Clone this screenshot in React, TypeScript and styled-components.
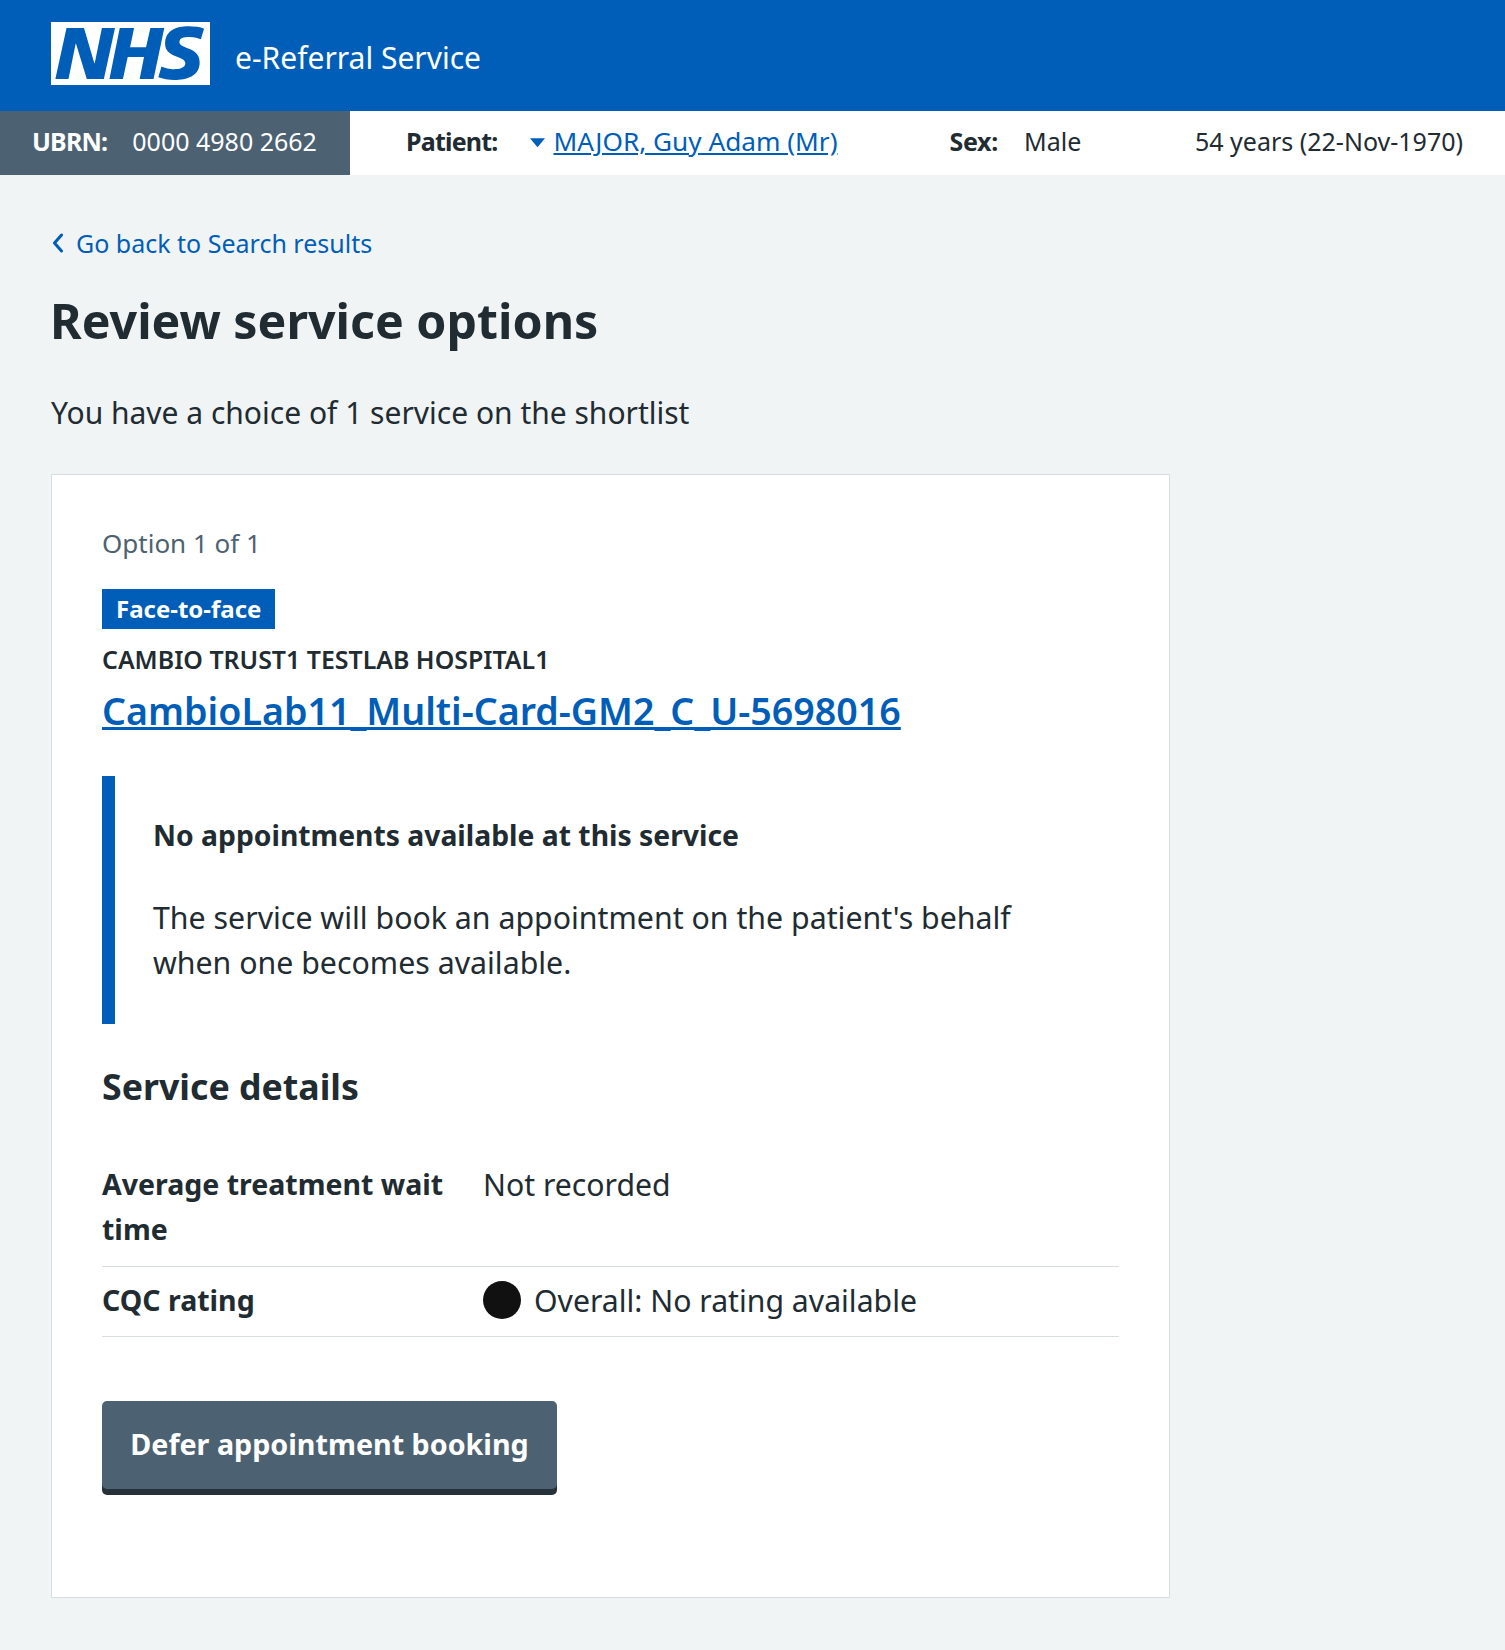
import React from 'react';
import styled, {createGlobalStyle} from 'styled-components';

const Palette = {
  Blue: '#005eb8',
  Text: '#212b32',
  Secondary: '#4c6272',
  Page: '#f0f4f5',
  Border: '#d8dde0',
  Shadow: '#263139',
};

const GlobalStyle = createGlobalStyle`
  html, body {
    margin: 0;
    padding: 0;
    background: ${Palette.Page};
    color: ${Palette.Text};
    font-family: "Noto Sans", "Open Sans", sans-serif;
  }
`;

export default function App(): JSX.Element {
  return (
    <Page>
      <GlobalStyle />
      <Header>
        <Logo viewBox="0 0 40 16" preserveAspectRatio="none" role="img" aria-label="NHS">
          <path fill="#fff" d="M0 0h40v16H0z" />
          <path
            fill={Palette.Blue}
            d="M3.9 1.5h4.4l2.6 9h.1l1.8-9h3.3l-2.8 13H9l-2.7-9h-.1l-1.8 9H1.1M17.3 1.5h3.6l-1 4.9h4L25 1.5h3.5l-2.7 13h-3.5l1.1-5.6h-4.1l-1.2 5.6h-3.4M37.7 4.4c-.7-.3-1.6-.6-2.9-.6-1.4 0-2.5.2-2.5 1.3 0 1.8 5.1 1.2 5.1 5.1 0 3.6-3.3 4.5-6.4 4.5-1.3 0-2.9-.3-4-.7l.8-2.7c.7.4 2.1.7 3.2.7s2.8-.2 2.8-1.5c0-2.1-5.1-1.3-5.1-5 0-3.4 2.9-4.4 5.8-4.4 1.6 0 3.1.2 4 .6"
          />
        </Logo>
        <ServiceName>e-Referral Service</ServiceName>
      </Header>

      <PatientBar>
        <Ubrn>
          <UbrnLabel>UBRN:</UbrnLabel>
          <span>0000 4980 2662</span>
        </Ubrn>
        <PatientLabel>Patient:</PatientLabel>
        <Caret viewBox="0 0 16 10">
          <path fill={Palette.Blue} d="M0 0h16L8 9.5z" />
        </Caret>
        <PatientLink href="#">MAJOR, Guy Adam (Mr)</PatientLink>
        <SexLabel>Sex:</SexLabel>
        <SexValue>Male</SexValue>
        <Age>54 years (22-Nov-1970)</Age>
      </PatientBar>

      <Main>
        <BackLink href="#">
          <Chevron viewBox="0 0 12 20">
            <path d="M10 2L3 10l7 8" fill="none" stroke={Palette.Blue} strokeWidth="3" strokeLinecap="round" strokeLinejoin="round" />
          </Chevron>
          Go back to Search results
        </BackLink>
        <Title>Review service options</Title>
        <Lead>You have a choice of 1 service on the shortlist</Lead>

        <Card>
          <OptionCount>Option 1 of 1</OptionCount>
          <Tag>Face-to-face</Tag>
          <Provider>CAMBIO TRUST1 TESTLAB HOSPITAL1</Provider>
          <ServiceLink href="#">CambioLab11_Multi-Card-GM2_C_U-5698016</ServiceLink>

          <Inset>
            <InsetTitle>No appointments available at this service</InsetTitle>
            <InsetText>The service will book an appointment on the patient's behalf when one becomes available.</InsetText>
          </Inset>

          <SectionTitle>Service details</SectionTitle>
          <Details>
            <DetailRow>
              <DetailKey>Average treatment wait time</DetailKey>
              <DetailValue>Not recorded</DetailValue>
            </DetailRow>
            <DetailRow>
              <DetailKey>CQC rating</DetailKey>
              <DetailValue>
                <RatingDot />
                Overall: No rating available
              </DetailValue>
            </DetailRow>
          </Details>

          <DeferButton type="button">Defer appointment booking</DeferButton>
        </Card>
      </Main>
    </Page>
  );
}
App.displayName = 'App';

const Page = styled.div`
  min-height: 1650px;
  background: ${Palette.Page};
`;

const Header = styled.header`
  display: flex;
  align-items: center;
  height: 111px;
  padding: 0 51px 5px;
  box-sizing: border-box;
  background: ${Palette.Blue};
`;

const Logo = styled.svg`
  width: 159px;
  height: 63px;
`;

const ServiceName = styled.div`
  margin: 9px 0 0 25px;
  color: #fff;
  font-size: 30px;
`;

const PatientBar = styled.div`
  display: flex;
  align-items: flex-start;
  height: 64px;
  padding: 0 42px 0 0;
  background: #fff;
  font-size: 25px;
  line-height: 60px;
`;

const Ubrn = styled.div`
  display: flex;
  gap: 25px;
  width: 350px;
  height: 100%;
  padding-left: 32px;
  box-sizing: border-box;
  background: ${Palette.Secondary};
  color: #fff;
`;

const UbrnLabel = styled.strong`
  letter-spacing: -0.8px;
`;

const PatientLabel = styled.strong`
  margin-left: 56px;
  letter-spacing: -0.8px;
`;

const Caret = styled.svg`
  align-self: center;
  width: 15px;
  height: 10px;
  margin-left: 33px;
`;

const PatientLink = styled.a`
  margin-left: 8px;
  color: ${Palette.Blue};
  font-size: 26.2px;
`;

const SexLabel = styled.strong`
  margin-left: 112px;
  letter-spacing: -0.3px;
`;

const SexValue = styled.span`
  margin-left: 26px;
`;

const Age = styled.span`
  margin-left: auto;
`;

const Main = styled.main`
  width: 1119px;
  margin-left: 51px;
  padding-top: 51px;
`;

const BackLink = styled.a`
  display: flex;
  align-items: center;
  gap: 12px;
  color: ${Palette.Blue};
  font-size: 25px;
  line-height: 34px;
  text-decoration: none;
`;

const Chevron = styled.svg`
  width: 13px;
  height: 20px;
`;

const Title = styled.h1`
  margin: 30px 0 0 -1px;
  font-size: 48.3px;
  line-height: 60px;
  font-weight: 700;
`;

const Lead = styled.p`
  margin: 43px 0 0;
  font-size: 30px;
  line-height: 40px;
`;

const Card = styled.section`
  display: flex;
  flex-direction: column;
  align-items: flex-start;
  height: 1124px;
  margin-top: 41px;
  padding: 50px 50px 0;
  box-sizing: border-box;
  background: #fff;
  border: 1px solid ${Palette.Border};
`;

const OptionCount = styled.div`
  color: ${Palette.Secondary};
  font-size: 26px;
  line-height: 36px;
`;

const Tag = styled.div`
  margin-top: 28px;
  padding: 0 14px;
  background: ${Palette.Blue};
  color: #fff;
  font-size: 24px;
  font-weight: 700;
  line-height: 40px;
`;

const Provider = styled.div`
  margin-top: 14px;
  font-size: 24.9px;
  font-weight: 600;
  line-height: 32px;
`;

const ServiceLink = styled.a`
  margin-top: 10px;
  color: ${Palette.Blue};
  font-size: 37.6px;
  font-weight: 600;
  line-height: 52px;
  text-decoration-thickness: 3px;
`;

const Inset = styled.div`
  align-self: stretch;
  margin-top: 39px;
  padding: 37px 60px 38px 38px;
  height: 248px;
  box-sizing: border-box;
  border-left: 13px solid ${Palette.Blue};
`;

const InsetTitle = styled.div`
  font-size: 28.3px;
  font-weight: 700;
  line-height: 44px;
`;

const InsetText = styled.p`
  margin: 38px 0 0;
  font-size: 30.3px;
  line-height: 45px;
`;

const SectionTitle = styled.h2`
  margin: 40px 0 0;
  font-size: 35.7px;
  font-weight: 700;
  line-height: 44px;
`;

const Details = styled.div`
  align-self: stretch;
  margin-top: 43px;
`;

const DetailRow = styled.div`
  display: grid;
  grid-template-columns: 381px 1fr;
  padding: 11px 0 13.5px;
  border-bottom: 1px solid ${Palette.Border};
  font-size: 30px;
  line-height: 45px;
`;

const DetailKey = styled.div`
  padding-right: 20px;
  font-size: 28.5px;
  font-weight: 700;
`;

const DetailValue = styled.div`
  display: flex;
  align-items: flex-start;
  gap: 13px;
  font-size: 30.2px;
`;

const RatingDot = styled.span`
  flex: none;
  width: 38px;
  height: 38px;
  margin-top: 3px;
  border-radius: 50%;
  background: #111;
`;

const DeferButton = styled.button`
  width: 455px;
  height: 88px;
  margin-top: 64px;
  padding: 0 0 4px;
  border: 0;
  border-radius: 5px;
  background: ${Palette.Secondary};
  box-shadow: 0 6px 0 ${Palette.Shadow};
  color: #fff;
  font-family: inherit;
  font-size: 28.7px;
  font-weight: 700;
`;
